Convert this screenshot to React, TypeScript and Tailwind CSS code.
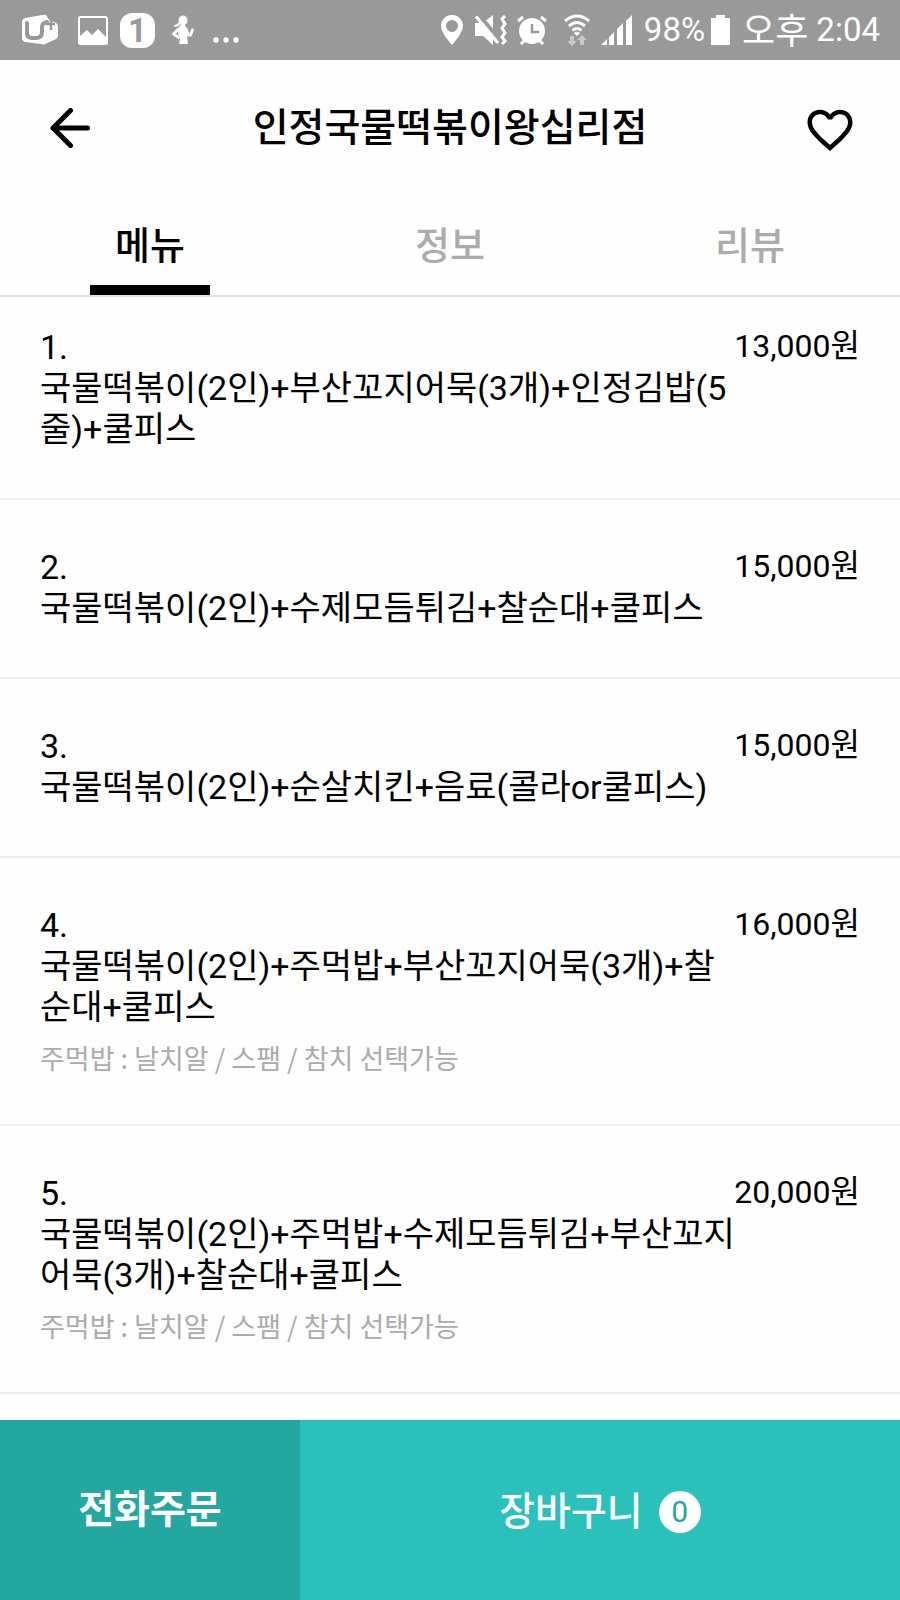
import { useState } from 'react';

interface MenuItem {
  id: number;
  name: string;
  price: string;
  note?: string;
}

const MENU: MenuItem[] = [
  { id: 1, name: '국물떡볶이(2인)+부산꼬지어묵(3개)+인정김밥(5줄)+쿨피스', price: '13,000원' },
  { id: 2, name: '국물떡볶이(2인)+수제모듬튀김+찰순대+쿨피스', price: '15,000원' },
  { id: 3, name: '국물떡볶이(2인)+순살치킨+음료(콜라or쿨피스)', price: '15,000원' },
  {
    id: 4,
    name: '국물떡볶이(2인)+주먹밥+부산꼬지어묵(3개)+찰순대+쿨피스',
    price: '16,000원',
    note: '주먹밥 : 날치알 / 스팸 / 참치 선택가능',
  },
  {
    id: 5,
    name: '국물떡볶이(2인)+주먹밥+수제모듬튀김+부산꼬지어묵(3개)+찰순대+쿨피스',
    price: '20,000원',
    note: '주먹밥 : 날치알 / 스팸 / 참치 선택가능',
  },
];

const TABS = ['메뉴', '정보', '리뷰'];

function StatusBar() {
  return (
    <div className="flex h-[60px] items-center justify-between bg-[#999999] pl-[22px] pr-5 text-white">
      <div className="flex items-center">
        {/* U+ carrier */}
        <svg className="mr-5 h-8 w-9" viewBox="0 0 36 32" fill="none">
          <path d="M3 4 20 1q4-1 5 1l1 3 8 4q2 1 2 4v9q0 2-2 3l-11 5q-2 1-4 0L3 28q-3-1-3-4V8q0-3 3-4Z" fill="#fff" />
          <path d="M5 9v10q0 5 5 5h4q6 0 6-6v-5q0-4 5-5" stroke="#999999" strokeWidth="4" strokeLinecap="round" />
          <path d="M8 6v11q0 3 4 3t4-3V6" fill="#fff" />
          <path d="M29 4v12M24 10h9" stroke="#999999" strokeWidth="2.5" />
        </svg>
        {/* gallery */}
        <svg className="mr-3 h-[29px] w-[30px]" viewBox="0 0 30 29" fill="none">
          <rect x="1" y="1" width="28" height="27" rx="1.5" stroke="#fff" strokeWidth="2" />
          <path d="M2 20 9 14l5 5 6-6 8 8v7H2Z" fill="#fff" />
        </svg>
        <span className="mr-4 flex size-[35px] items-center justify-center rounded-xl bg-white font-['Roboto',sans-serif] text-[33px] leading-none font-bold text-[#999999]">
          1
        </span>
        {/* fitness */}
        <svg className="mr-[18px] h-[30px] w-6" viewBox="0 0 24 30" fill="none">
          <ellipse cx="12" cy="5.500" rx="4.500" ry="5" fill="#fff" />
          <path d="M9 6 6 9l-4 2q4 2 7-1Z" fill="#fff" />
          <path d="M8 12l3-3 3 1 2 5v6l1 8H8l1-5-2-6Z" fill="#fff" />
          <path d="M8 13.500 2.500 19l6 4" stroke="#fff" strokeWidth="3" strokeLinejoin="round" />
          <path d="M15 14l2 6h2.500l2-5" stroke="#fff" strokeWidth="3" strokeLinejoin="round" strokeLinecap="round" />
        </svg>
        <svg className="mt-5 h-1.5 w-[26px]" viewBox="0 0 26 6" fill="#fff">
          <circle cx="3" cy="3" r="2.7" />
          <circle cx="13" cy="3" r="2.7" />
          <circle cx="23" cy="3" r="2.7" />
        </svg>
      </div>

      <div className="flex items-center">
        {/* location */}
        <svg className="mr-3 h-[30px] w-[22px]" viewBox="0 0 22 30">
          <path d="M11 0a11 11 0 0 0-11 11c0 7 11 19 11 19s11-12 11-19A11 11 0 0 0 11 0Zm0 5a6 6 0 1 1 0 12 6 6 0 0 1 0-12Z" fill="#fff" fillRule="evenodd" />
        </svg>
        {/* vibrate, muted */}
        <svg className="mr-2.5 h-[30px] w-8" viewBox="0 0 32 30" fill="none">
          <path d="M0 8h8L18 0v30L8 21H0Z" fill="#fff" />
          <path d="M4 0l21 25" stroke="#999999" strokeWidth="4" />
          <path d="M1 1.500 23 28" stroke="#fff" strokeWidth="3" />
          <path d="m30 1-3 3 3 5-3 4 3 5-3 4 3 4-3 3" stroke="#fff" strokeWidth="3" />
        </svg>
        {/* alarm */}
        <svg className="mr-4 h-[30px] w-[30px]" viewBox="0 0 30 30" fill="none">
          <circle cx="15" cy="16" r="13" fill="#fff" />
          <path d="m1 6 5-4M29 6l-5-4M4 29l4-4M26 29l-4-4" stroke="#fff" strokeWidth="3" />
          <path d="M15 9v8h7" stroke="#999999" strokeWidth="2.5" />
        </svg>
        {/* wifi */}
        <svg className="mr-2.5 h-8 w-7" viewBox="0 0 28 32" fill="none">
          <path d="M2 7q12-10 24 0M6 12q8-7 16 0M9.500 16.500q4.500-4 9 0" stroke="#fff" strokeWidth="3" />
          <path d="m14 22-3-3q3-2.500 6 0Z" fill="#fff" />
          <path d="M7 22h4v5h3l-5 5-5-5h3ZM17 31h4v-5h3l-5-5-5 5h3Z" fill="#c9c9c9" />
        </svg>
        {/* signal */}
        <svg className="mr-3 h-[30px] w-[31px]" viewBox="0 0 31 30" fill="#fff">
          <path d="M0 30l6-6v6ZM8 22l5-5v13H8ZM16 14l6-6v22h-6ZM25 6l6-6v30h-6Z" />
        </svg>
        <span className="font-['Roboto',sans-serif] text-[33px] leading-10">98%</span>
        {/* battery */}
        <svg className="mr-3 ml-1.5 h-[30px] w-[19px]" viewBox="0 0 19 30" fill="#fff">
          <path d="M5 0h9v3h5v27H0V3h5Z" />
        </svg>
        <span className="pb-1 font-['Noto_Sans_CJK_KR',sans-serif] text-4xl leading-9">오후</span>
        <span className="ml-2 font-['Roboto',sans-serif] text-[33px] leading-10">2:04</span>
      </div>
    </div>
  );
}

function MenuRow({ item }: { item: MenuItem }) {
  return (
    <li className="flex items-start border-b-2 border-[#ededed] px-10 pt-[47px] pb-12 first:pt-[30px]">
      <div className="-mr-2 min-w-0 flex-1">
        <h2 className="text-[34px] leading-[41px]">
          <span className="block">{item.id}.</span>
          {item.name}
        </h2>
        {item.note && (
          <p className="mt-3 font-['Noto_Sans_CJK_KR',sans-serif] text-[27px] leading-9 text-[#ababab]">
            {item.note}
          </p>
        )}
      </div>
      <span className="shrink-0 text-[32px] leading-[38px]">{item.price}</span>
    </li>
  );
}

export default function App() {
  const [tab, setTab] = useState('메뉴');
  const [liked, setLiked] = useState(false);

  return (
    <div className="flex min-h-screen flex-col bg-[#fefefe] font-['Roboto','Noto_Sans_CJK_KR',sans-serif] text-black">
      <StatusBar />

      <header className="flex h-[136px] items-center justify-between px-[43px]">
        <button type="button" aria-label="뒤로" className="flex size-[54px] items-center justify-center">
          <svg className="size-10" viewBox="0 0 40 40" fill="none" stroke="currentColor" strokeWidth="5" strokeLinecap="round" strokeLinejoin="round">
            <path d="M37.500 20H3M20.500 2.500 3 20l17.500 17.500" />
          </svg>
        </button>
        <h1 className="text-[39px] leading-[48px] font-medium">인정국물떡볶이왕십리점</h1>
        <button type="button" aria-label="찜하기" aria-pressed={liked} onClick={() => setLiked(!liked)} className="mt-1">
          <svg className="size-[54px]" viewBox="0 0 24 24" fill="currentColor">
            {liked ? (
              <path d="m12 21.350-1.450-1.320C5.400 15.360 2 12.280 2 8.500 2 5.420 4.420 3 7.500 3c1.740 0 3.410.81 4.500 2.090C13.090 3.810 14.760 3 16.500 3 19.580 3 22 5.420 22 8.500c0 3.780-3.400 6.860-8.550 11.540Z" />
            ) : (
              <path d="M16.500 3c-1.740 0-3.410.81-4.500 2.090C10.910 3.810 9.240 3 7.500 3 4.420 3 2 5.420 2 8.500c0 3.780 3.400 6.860 8.550 11.540L12 21.350l1.450-1.320C18.600 15.360 22 12.280 22 8.500 22 5.420 19.580 3 16.500 3Zm-4.400 15.550-.1.100-.1-.1C7.140 14.240 4 11.390 4 8.500 4 6.500 5.500 5 7.500 5c1.540 0 3.040.99 3.570 2.360h1.870C13.460 5.990 14.960 5 16.500 5c2 0 3.500 1.500 3.500 3.500 0 2.890-3.140 5.740-7.900 10.050Z" />
            )}
          </svg>
        </button>
      </header>

      <nav className="grid grid-cols-3 border-b-2 border-[#e3e3e3]">
        {TABS.map((label) => (
          <button
            key={label}
            type="button"
            onClick={() => setTab(label)}
            className={`flex flex-col items-center pt-[25px] text-[38px] leading-[50px] font-medium ${
              tab === label ? 'text-black' : 'text-[#ababab]'
            }`}
          >
            {label}
            <span className={`mt-3.5 h-2.5 w-2/5 ${tab === label ? 'bg-black' : 'bg-transparent'}`} />
          </button>
        ))}
      </nav>

      <ul className="flex-1">
        {MENU.map((item) => (
          <MenuRow key={item.id} item={item} />
        ))}
      </ul>

      <footer className="sticky bottom-0 grid h-[180px] grid-cols-3 text-[39px] leading-[48px] text-white">
        <button type="button" className="bg-[#25a7a1] font-bold">전화주문</button>
        <button type="button" className="col-span-2 flex items-center justify-center gap-4 bg-[#2ac1bc] pt-1 font-medium">
          장바구니
          <span className="flex size-[42px] items-center justify-center rounded-full bg-white text-3xl font-normal text-[#25a7a1]">0</span>
        </button>
      </footer>
    </div>
  );
}
